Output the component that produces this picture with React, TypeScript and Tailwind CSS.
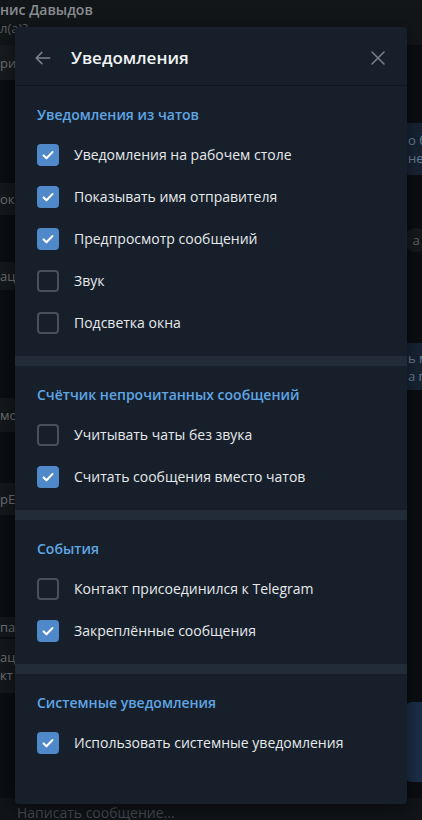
import React from "react";

const font = { fontFamily: '"Open Sans", "Noto Sans", sans-serif' };

function Check({ checked }: { checked: boolean }) {
  if (checked) {
    return (
      <div className="w-[22px] h-[22px] rounded-[4px] bg-[#5089c9] flex items-center justify-center shrink-0">
        <svg width="22" height="22" viewBox="0 0 22 22" fill="none">
          <path d="M6.6 11.4l2.9 2.9 5.9-6.2" stroke="#ffffff" strokeWidth="2.1" strokeLinecap="round" strokeLinejoin="round" />
        </svg>
      </div>
    );
  }
  return <div className="w-[22px] h-[22px] rounded-[4px] border-2 border-[#48515b] shrink-0" />;
}

function Row({ label, checked }: { label: string; checked: boolean }) {
  return (
    <div className="h-[42px] flex items-center gap-[15px]">
      <Check checked={checked} />
      <span className="text-[14px] text-[#e6e9ec] leading-[20px]">{label}</span>
    </div>
  );
}

function Section({ title, items, last }: { title: string; items: [string, boolean][]; last?: boolean }) {
  return (
    <div className={last ? "pt-[19px] pb-[40px] px-[22px]" : "pt-[19px] pb-[12px] px-[22px]"}>
      <div className="text-[14px] leading-[20px] font-semibold text-[#5fa5e4] mb-[9px]">{title}</div>
      {items.map(([l, c]) => (
        <Row key={l} label={l} checked={c} />
      ))}
    </div>
  );
}

function Sep() {
  return <div className="h-[10px] bg-[#222c38]" />;
}

export default function App() {
  return (
    <div className="relative w-[422px] h-[820px] overflow-hidden bg-[#0b0e12]" style={font}>
      {/* dimmed app behind */}
      <div className="flex flex-col h-full">
        <div className="h-[45px] bg-[#131619] pt-[1px] shrink-0">
          <div className="text-[14px] leading-[18px] font-semibold text-[#8a8e93]">нис Давыдов</div>
          <div className="text-[13px] leading-[18px] text-[#5a5f64]">л(а)?</div>
        </div>
        <div className="flex flex-1 min-h-0">
          <div className="w-[40px] flex flex-col text-[13px] text-[#6d7277] leading-[18px]">
            <div className="h-[35px] bg-[#181b1f] flex items-center">ри</div>
            <div className="h-[103px]" />
            <div className="h-[32px] bg-[#15181c] flex items-center">ок</div>
            <div className="h-[47px]" />
            <div className="h-[28px] bg-[#15181c] flex items-center">ац</div>
            <div className="h-[108px]" />
            <div className="h-[34px] bg-[#15181c] flex items-center">мо</div>
            <div className="h-[51px]" />
            <div className="h-[32px] bg-[#15181c] flex items-center">рЕ</div>
            <div className="h-[102px]" />
            <div className="h-[20px] bg-[#15181c] flex items-center">па</div>
            <div className="h-[2px]" />
            <div className="h-[54px] bg-[#15181c] flex flex-col justify-center">
              <span>ац</span>
              <span>кт</span>
            </div>
          </div>
          <div className="flex-1" />
          <div className="w-[18px] flex flex-col text-[13px] leading-[18px] text-[#6b8299]">
            <div className="h-[78px]" />
            <div className="h-[52px] bg-[#182434] pl-[4px] flex flex-col justify-center whitespace-nowrap">
              <span>о б</span>
              <span>не</span>
            </div>
            <div className="h-[53px]" />
            <div className="h-[24px] w-[24px] rounded-full bg-[#16191d] text-[#5f6469] flex items-center justify-center">а</div>
            <div className="h-[91px]" />
            <div className="h-[47px] bg-[#182434] pl-[4px] flex flex-col justify-center whitespace-nowrap">
              <span>ь м</span>
              <span>а п</span>
            </div>
            <div className="h-[312px]" />
            <div className="h-[80px] bg-[#1b2f47] rounded-l-[8px]" />
          </div>
        </div>
        <div className="h-[22px] bg-[#111418] shrink-0 pl-[17px] pt-[5px] text-[14px] leading-[20px] text-[#464b51] overflow-hidden whitespace-nowrap">
          Написать сообщение...
        </div>
      </div>

      {/* modal */}
      <div className="absolute left-[15px] top-[27px] w-[392px] rounded-[4px] bg-[#17202a] shadow-[0_4px_20px_rgba(0,0,0,0.5)] overflow-hidden">
        <div className="h-[59px] flex items-center px-[20px] pt-[3px] border-b border-[#10171f]">
          <svg width="18" height="18" viewBox="0 0 24 24" fill="none" className="ml-[-1px]">
            <path d="M21 12H3.5M10.5 4.5L3 12l7.5 7.5" stroke="#7a828b" strokeWidth="2" strokeLinecap="round" strokeLinejoin="round" />
          </svg>
          <div className="ml-[19px] text-[17px] font-semibold text-[#f1f3f5] leading-[22px] flex-1">Уведомления</div>
          <svg width="18" height="18" viewBox="0 0 24 24" fill="none">
            <path d="M4 4l16 16M20 4L4 20" stroke="#7a828b" strokeWidth="2" strokeLinecap="round" />
          </svg>
        </div>
        <Section
          title="Уведомления из чатов"
          items={[
            ["Уведомления на рабочем столе", true],
            ["Показывать имя отправителя", true],
            ["Предпросмотр сообщений", true],
            ["Звук", false],
            ["Подсветка окна", false],
          ]}
        />
        <Sep />
        <Section
          title="Счётчик непрочитанных сообщений"
          items={[
            ["Учитывать чаты без звука", false],
            ["Считать сообщения вместо чатов", true],
          ]}
        />
        <Sep />
        <Section
          title="События"
          items={[
            ["Контакт присоединился к Telegram", false],
            ["Закреплённые сообщения", true],
          ]}
        />
        <Sep />
        <Section title="Системные уведомления" items={[["Использовать системные уведомления", true]]} last />
      </div>
    </div>
  );
}
